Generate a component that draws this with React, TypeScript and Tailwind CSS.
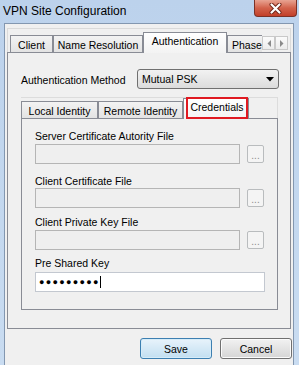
import React from "react";

function CloseX() {
  return (
    <svg width="13" height="11" viewBox="0 0 13 11">
      <path d="M2.5 1.5 L10.5 9.5 M10.5 1.5 L2.5 9.5" stroke="#6e2417" strokeWidth="4" strokeLinecap="round" />
      <path d="M2.5 1.5 L10.5 9.5 M10.5 1.5 L2.5 9.5" stroke="#ffffff" strokeWidth="2.2" strokeLinecap="round" />
    </svg>
  );
}

function Tab({ label, width, selected }: { label: string; width: string; selected?: boolean }) {
  if (selected) {
    return (
      <div
        className={`${width} relative z-10 -mb-px h-[21px] shrink-0 border-x border-t border-[#898c95] bg-gradient-to-b from-[#ffffff] to-[#f3f3f3] pt-[1px] text-center leading-[14px]`}
      >
        {label}
      </div>
    );
  }
  return (
    <div
      className={`${width} h-[17px] shrink-0 overflow-hidden whitespace-nowrap border-x border-t border-[#898c95] bg-gradient-to-b from-[#f3f3f3] to-[#e3e3e3] pt-[2px] text-center leading-[14px]`}
    >
      {label}
    </div>
  );
}

function ScrollArrow({ dir }: { dir: "left" | "right" }) {
  return (
    <div className="flex h-[14px] w-[13px] items-center justify-center border border-[#c9c9c9] bg-gradient-to-b from-[#fbfbfb] to-[#ececec]">
      <svg width="4" height="7" viewBox="0 0 4 7">
        {dir === "left" ? <polygon points="4,0 4,7 0.5,3.5" fill="#8a8a8a" /> : <polygon points="0,0 0,7 3.5,3.5" fill="#8a8a8a" />}
      </svg>
    </div>
  );
}

function FileField({ label, top, inputTop }: { label: string; top: string; inputTop: string }) {
  return (
    <>
      <div className={`${top} h-[14px] leading-[14px]`}>{label}</div>
      <div className={`${inputTop} flex h-[20px] items-center`}>
        <div className="h-[20px] w-[205px] border border-[#b5b5b5] bg-[#efefef]" />
        <div className="ml-[7px] flex h-[18px] w-[17px] items-end justify-center rounded-[2px] border border-[#b9bcbe] bg-[#f4f4f4] pb-[1px] text-[10px] leading-[10px] text-[#8c8c8c]">
          ...
        </div>
      </div>
    </>
  );
}

export default function App() {
  return (
    <div className="flex h-[365px] w-[299px] flex-col overflow-hidden bg-gradient-to-b from-[#bcd2ec] to-[#c9dcf1] font-['Liberation_Sans',Arial,sans-serif] text-[10.5px] text-black">
      {/* title bar */}
      <div className="flex h-[23px] shrink-0 items-start">
        <span className="pl-[3px] pt-[4px] text-[12px] leading-[14px]">VPN Site Configuration</span>
        <div className="ml-auto mr-[2px] flex h-[17px] w-[43px] items-center justify-center rounded-b-[4px] border border-t-0 border-[#7b3126] bg-gradient-to-b from-[#e8a392] via-[#d2624b] to-[#c23f29]">
          <CloseX />
        </div>
      </div>

      {/* dialog body */}
      <div className="ml-[4px] mr-[5px] flex flex-1 flex-col border-x border-t border-[#8397b0] bg-[#f0f0f0] pl-[2px] pr-[1px] pt-[4px]">
        {/* outer tab control */}
        <div className="mr-[1px] flex h-[301px] flex-col">
          <div className="flex h-[24px] shrink-0 items-end border-x border-t border-[#dadada] pl-[2px]">
            <Tab label="Client" width="w-[43px]" />
            <Tab label="Name Resolution" width="w-[90px]" />
            <Tab label="Authentication" width="w-[84px]" selected />
            <div className="h-[17px] w-[35px] shrink-0 overflow-hidden whitespace-nowrap border-l border-t border-[#898c95] bg-gradient-to-b from-[#f3f3f3] to-[#e3e3e3] pl-[4px] pt-[2px] leading-[14px]">
              Phase
            </div>
            <div className="mb-[2px] flex">
              <ScrollArrow dir="left" />
              <ScrollArrow dir="right" />
            </div>
          </div>

          <div className="flex flex-1 flex-col border border-[#898c95] bg-[#f0f0f0] pb-[18px] pl-[13px] pr-[11px] pt-[16px]">
            <div className="flex h-[20px] items-start">
              <span className="mt-[4px] leading-[14px]">Authentication Method</span>
              <div className="ml-auto flex h-[20px] w-[142px] items-center rounded-[3px] border border-[#707070] bg-gradient-to-b from-[#f2f2f2] to-[#dcdcdc] pl-[4px] pr-[4px]">
                <span className="leading-[14px]">Mutual PSK</span>
                <svg className="ml-auto" width="8" height="5" viewBox="0 0 8 5">
                  <polygon points="0,0 8,0 4,4.5" fill="#000" />
                </svg>
              </div>
            </div>

            {/* inner tab control */}
            <div className="mr-[1px] mt-[8px] flex flex-1 flex-col">
              <div className="flex h-[21px] shrink-0 items-end border-r border-t border-[#dcdcdc]">
                <Tab label="Local Identity" width="w-[77px]" />
                <Tab label="Remote Identity" width="w-[85px]" />
                <div className="relative z-10 -mb-px h-[21px] w-[66px] shrink-0 border-x border-t border-[#898c95] bg-gradient-to-b from-[#ffffff] to-[#f3f3f3] pl-[2px] pt-[1px] text-center leading-[14px]">
                  Credentials
                  <span className="absolute -top-[2px] left-[2px] right-0 h-[22px] border-2 border-[#e01a22]" />
                </div>
              </div>

              <div className="flex flex-1 flex-col border border-[#898c95] bg-[#f0f0f0] pl-[13px] pt-[10px]">
                <FileField label="Server Certificate Autority File" top="" inputTop="mt-[1px]" />
                <FileField label="Client Certificate File" top="mt-[10px]" inputTop="mt-0" />
                <FileField label="Client Private Key File" top="mt-[7px]" inputTop="mt-[1px]" />
                <div className="mt-[6px] h-[14px] leading-[14px]">Pre Shared Key</div>
                <div className="mt-[2px] flex h-[20px] w-[230px] items-center border border-[#c3c8d0] bg-white pl-[3px]">
                  <span className="text-[9px] leading-[14px] tracking-[1.3px]">●●●●●●●●●</span>
                  <span className="h-[12px] w-px bg-black" />
                </div>
              </div>
            </div>
          </div>
        </div>

        {/* buttons */}
        <div className="mt-[9px] flex justify-end gap-[8px]">
          <button className="h-[21px] w-[72px] rounded-[3px] border border-[#3c7fb1] bg-gradient-to-b from-[#e8f3fb] to-[#c2dff1] leading-[14px] shadow-[inset_0_0_0_1px_#d6ecf8]">
            Save
          </button>
          <button className="h-[21px] w-[72px] rounded-[3px] border border-[#707070] bg-gradient-to-b from-[#f2f2f2] to-[#d5d5d5] leading-[14px] shadow-[inset_0_0_0_1px_#fbfbfb]">
            Cancel
          </button>
        </div>
      </div>
    </div>
  );
}
